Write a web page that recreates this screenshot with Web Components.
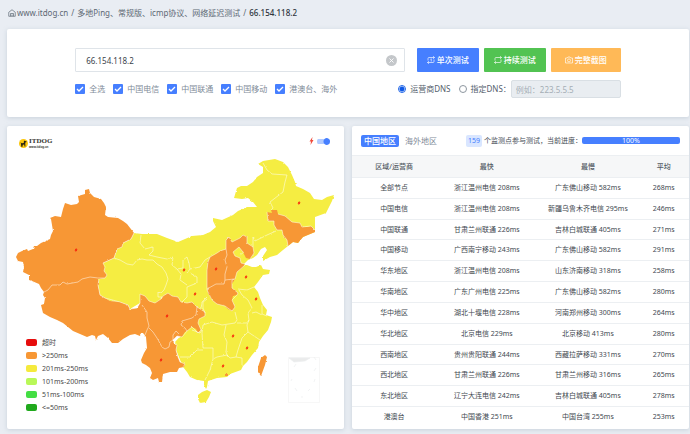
<!DOCTYPE html>
<html>
<head>
<meta charset="utf-8">
<title>66.154.118.2 - Ping</title>
<style>
html{background:#e9edf3}
body{margin:0;font-family:"Noto Sans","Noto Sans CJK SC",sans-serif;color:#444b54;
--blue:#467fff;--muted:#7f8b98;--line:#dfe4e9}
</style>
</head>
<body>
<ping-page></ping-page>
<script>
const define=(name,html,ready)=>{
  const t=document.createElement('template');
  t.innerHTML=html;
  customElements.define(name,class extends HTMLElement{
    constructor(){
      super();
      this.attachShadow({mode:'open'}).append(t.content.cloneNode(true));
    }
    connectedCallback(){ if(ready) ready(this,this.shadowRoot); }
  });
};

define('crumb-bar',`
<style>
:host{display:block;font-size:8px;line-height:12px;color:#5d6873}
nav{display:flex;align-items:center;gap:3px;padding:0 1px}
a{color:inherit;text-decoration:none;display:flex;align-items:center;gap:1px}
svg{width:8px;height:8px;fill:none;stroke:currentColor}
b{font-weight:500;color:#2e353d}
</style>
<nav aria-label="breadcrumb">
<a href="#"><svg viewBox="0 0 16 16" stroke-width="1.4"><path d="M1.5 6.5 8 1.5l6.500 5V14.500H1.500zM5 14.500V9h6v5.500M8 14.500V11"/></svg>www.itdog.cn</a>
<span>/</span><a href="#">多地Ping、常规版、icmp协议、网络延迟测试</a><span>/</span><b>66.154.118.2</b>
</nav>`);

define('panel-card',`
<style>
:host{display:flex;flex-direction:column;background:#fff;border-radius:2px;box-shadow:0 1px 4px #a9b8c680;min-width:0}
</style><slot></slot>`);

define('check-option',`
<style>
:host{display:block}
label{display:flex;align-items:center;gap:4px;color:var(--muted);font-size:8px;line-height:12px;white-space:nowrap}
.box{display:grid;width:10px;height:10px}
input{grid-area:1/1;appearance:none;margin:0;border-radius:1px;background:#fff}
input:checked{background:var(--blue)}
svg{grid-area:1/1;width:10px;height:10px;pointer-events:none;fill:none;stroke:#fff;stroke-width:1.3}
</style>
<label><span class="box"><input type="checkbox" checked><svg viewBox="0 0 10 10"><path d="M2 5l2 2 4-4"/></svg></span><slot></slot></label>`);

define('action-button',`
<style>
:host{display:block;flex:none}
button{display:flex;align-items:center;justify-content:center;gap:2px;width:100%;height:24px;padding:0 10px;border:0;border-radius:1px;background:var(--tone);color:#fff;font:500 8px/12px "Noto Sans","Noto Sans CJK SC",sans-serif;white-space:nowrap}
</style>
<button type="button"><slot name="icon"></slot><slot></slot></button>`);

define('ping-form',`
<style>
:host{display:block;padding:19px 10%}
form{display:grid;gap:8px}
.row{display:flex;align-items:center;gap:12px}
.field{flex:1;display:flex;align-items:center;box-sizing:border-box;height:24px;border:1px solid var(--line);border-radius:1px;padding:0 7px 0 10px;min-width:0}
input[type=text]{font:inherit;color:inherit;border:0;outline:0;background:none;padding:0;min-width:0}
.field input{flex:1;font-size:8px;color:#3c444c}
.clear{border:0;padding:0;background:none;display:flex}
.clear svg{width:11px;height:11px}
.actions{display:flex;gap:5px}
action-button svg{width:8px;height:8px;fill:none;stroke:#fff;stroke-width:1.3}
.opts{height:18px;justify-content:space-between}
.checks{display:flex;gap:8px}
.dns{display:flex;align-items:center;font-size:8px;line-height:12px;color:#56616d;white-space:nowrap;gap:8px}
.dns label{display:flex;align-items:center;gap:4px}
input[type=radio]{appearance:none;box-sizing:border-box;width:8px;height:8px;margin:0;border:1px solid #8d969f;border-radius:50%;background:#fff}
input[type=radio]:checked{border-color:#1f65e8;background:radial-gradient(circle,#0e58e6 0 2px,#fff 3px)}
.custom{display:flex;align-items:center}
.custom>input{box-sizing:border-box;width:110px;height:18px;border:1px solid #d9dfe4;border-radius:2px;background:#e9edf1;padding:0 4px;font-size:8px}
::placeholder{color:#a5adb5;opacity:1}
</style>
<form>
<div class="row">
<div class="field"><input type="text" aria-label="Host" value="66.154.118.2"><button class="clear" type="button" aria-label="Clear"><svg viewBox="0 0 22 22"><circle cx="11" cy="11" r="11" fill="#c4c7ca"/><path d="M7 7l8 8M15 7l-8 8" stroke="#fff" stroke-width="1.800"/></svg></button></div>
<div class="actions">
<action-button style="--tone:#467fff"><svg slot="icon" viewBox="0 0 16 16"><path d="M2 9V5q0-2 2-2h11M12 .5 15 3l-3 2.500M14 7v4q0 2-2 2H1M4 10.500 1 13l3 2.500M7 6.500l1.500-1V11"/></svg>单次测试</action-button>
<action-button style="--tone:#52c352"><svg slot="icon" viewBox="0 0 16 16"><path d="M2 9V5q0-2 2-2h11M12 .5 15 3l-3 2.500M14 7v4q0 2-2 2H1M4 10.500 1 13l3 2.500"/></svg>持续测试</action-button>
<action-button style="--tone:#ffb957;width:70px"><svg slot="icon" viewBox="0 0 16 16"><path d="M1 4h3.500L6 2h4l1.500 2H15v10H1z"/><circle cx="8" cy="8.800" r="3"/></svg>完整截图</action-button>
</div></div>
<div class="row opts">
<div class="checks"><check-option>全选</check-option><check-option>中国电信</check-option><check-option>中国联通</check-option><check-option>中国移动</check-option><check-option>港澳台、海外</check-option></div>
<div class="dns"><label><input type="radio" name="dns" checked>运营商DNS</label><div class="custom"><label><input type="radio" name="dns">指定DNS：</label><input type="text" aria-label="DNS" placeholder="例如：223.5.5.5" disabled></div></div>
</div>
</form>`);

define('site-logo',`
<style>
:host{display:flex;gap:1px;align-items:center;color:#33342f}
svg{width:9px;height:9px}
div{font:bold 7px/8px "Liberation Serif",serif}
small{display:block;font:bold 3px/4px "Liberation Sans",sans-serif}
</style>
<svg viewBox="0 0 18 18"><circle cx="9" cy="9" r="9" fill="#fcc70d"/><path d="M10 3l2 1 3 .5-.5 2-2 .5.300 8H11l-.5-4-3 .5-.5 4H4.500l-.5-6-1-3 2.500 2 4-.5z" fill="#272314"/></svg>
<div>ITDOG<small>www.itdog.cn</small></div>`);

define('map-switch',`
<style>
:host{display:block}
label{display:flex;align-items:center;gap:3px}
svg{width:5px;height:8px}
input{appearance:none;margin:0;width:13px;height:7px;border-radius:4px;background:radial-gradient(circle at 10px center,var(--blue) 3px,#0000 4px),linear-gradient(#0000 1px,#b1caff 1px 6px,#0000 6px)}
</style>
<label><svg viewBox="0 0 5 8"><path d="M3.500 0 .5 4.500h1.500L1.500 8 4.500 3H3z" fill="#f04a3a"/></svg><input type="checkbox" role="switch" aria-label="Markers" checked></label>`);

define('map-legend',`
<style>
:host{display:block}
ul{list-style:none;margin:0;padding:0}
li{display:flex;align-items:center;gap:5px;font-size:7px;line-height:13px;color:#4a4a4a}
i{width:11px;height:7px;border-radius:2px}
</style><ul></ul>`,(el,root)=>{
  const items=[['#e60d0d','超时'],['#f79734','>250ms'],['#f5ea3d','201ms-250ms'],['#b9f858','101ms-200ms'],['#43de43','51ms-100ms'],['#20a91d','<=50ms']];
  root.querySelector('ul').replaceChildren(...items.map(([c,t])=>{
    const li=document.createElement('li'),i=document.createElement('i');
    i.style.background=c; li.append(i,t); return li;
  }));
});

define('china-map',`
<style>
:host{display:block}
svg{display:block;width:100%;height:100%}
.y{fill:#f5ed42}.o{fill:#f79734}
.b{fill:none;stroke:#fff;stroke-opacity:.62;stroke-width:.8;stroke-linejoin:round}
</style>
<svg viewBox="7 126 337 303" preserveAspectRatio="xMidYMid meet" role="img" aria-label="China">
<defs><filter id="coast" x="0" y="0" width="100%" height="100%"><feTurbulence type="fractalNoise" baseFrequency=".28" numOctaves="2" seed="4"/><feDisplacementMap in="SourceGraphic" scale="2" xChannelSelector="R" yChannelSelector="G"/></filter></defs>
<g filter="url(#coast)">
<path class="y" d="M134 233 142 234 157 234 167 238 178 242 192 236 203 235 210 232 216 227 213 221 213 218 222 220 233 215 238 211 247 207 257 207 253 202 248 198 242 199 234 198 237 188 241 186 247 186 253 182 257 177 263 173 263 167 258 164 263 161 275 159 283 162 288 167 292 175 295 182 296 186 303 189 310 193 314 199 322 200 327 197 334 195 332 201 326 213 315 217 315 232 303 237 298 243 293 242 288 246 283 250 277 255 270 257 263 261 263 256 267 250 265 247 261 249 257 255 253 258 248 260 246 262 243 265 247 265 252 267 256 267 261 265 263 269 270 270 269 274 263 275 258 282 254 287 258 292 260 298 263 305 267 310 266 315 272 317 271 322 268 330 263 336 259 342 258 348 252 355 247 362 243 366 241 370 230 374 227 377 217 378 208 381 207 387 206 389 204 385 204 381 197 380 190 377 187 372 183 367 176 350 175 342 185 331 180 310 150 304 140 303 130 309 128 305 120 302 110 301 100 295 98 285 99 279 105 278 103 263 114 258 117 249 123 243 131 239z"/>
<path class="y" d="M202 392 207 390 211 392 209 397 206 402 200 403 198 399 198 395z"/>
<path class="o" d="M16 257 18 253 22 251 27 249 28 251 33 249 34 246 37 246 41 243 50 239 51 235 53 231 51 219 50 218 55 216 61 217 63 209 65 203 71 205 77 204 79 202 78 196 85 194 85 190 89 189 90 193 94 197 101 199 104 203 106 207 105 215 108 217 118 218 123 221 127 224 134 233 131 239 123 243 122 247 117 249 114 258 103 263 105 267 104 271 107 275 105 278 99 279 98 285 100 295 105 298 110 301 120 302 128 305 130 309 137 308 140 303 140 294 145 296 149 301 155 303 161 299 163 296 168 293 172 296 178 297 181 302 187 303 192 302 197 307 205 312 205 316 199 319 198 323 201 330 198 333 196 329 192 327 187 331 185 332 182 337 177 336 173 340 173 342 177 345 176 350 178 357 180 362 185 364 184 367 179 368 177 372 170 372 163 374 162 382 159 382 158 378 153 380 150 378 152 373 150 368 146 365 142 363 141 360 144 353 147 348 146 337 143 333 141 333 140 336 135 334 130 335 123 339 118 343 112 343 108 338 103 334 98 336 96 340 95 336 92 335 87 337 80 334 73 331 68 327 63 323 57 320 50 317 43 313 41 305 44 304 45 298 43 295 44 292 41 288 39 284 32 281 29 280 29 275 23 272 24 267 23 262 18 261z"/>
<path class="o" d="M210 257 217 253 220 251 226 249 226 240 229 237 232 242 240 238 243 235 247 237 247 243 253 247 254 253 250 259 246 258 243 252 239 247 233 252 235 256 240 258 241 263 245 264 243 267 237 272 235 279 232 284 232 288 238 293 237 295 233 296 232 300 235 307 232 311 228 309 225 306 217 304 212 300 208 293 207 286 207 270 208 262zM267 212 272 213 271 210 277 210 278 214 285 216 292 222 300 223 302 227 308 227 311 226 315 230 315 232 303 237 298 243 293 242 288 246 287 240 283 235 282 230 277 230 274 225 274 221 268 221zM265 355 267 357 265 365 261 376 258 372 258 367 261 358zM225 374h3v2h-3z"/>
<g class="b">
<path d="M44 292 48 290 52 285 60 285 63 282 67 284 78 282 82 279 90 277 98 278 105 278 107 275 104 271 105 267 103 263 114 258 117 249 122 247 123 243 131 239 134 233"/>
<path d="M99 279 98 285 100 295 105 298 120 302 128 305 130 309 137 308 140 303 140 294 145 296 149 301 155 303 161 299 163 296 168 293 172 296 178 297 181 302 187 303 192 302 197 307 205 312 205 316 199 319 198 323 201 330 198 333 192 327 187 331 182 337 177 336 173 340 177 345 176 350 178 357 180 362 185 364 183 367"/>
<path d="M114 258 120 260 127 264 133 265 137 260 142 259 147 260 153 260 157 264 162 267 166 273 168 279 166 285 164 290 161 293 158 292 158 297 162 297 161 299M141 235 140 243 145 249 153 247 153 251 149 255 157 257 167 259 173 257 172 265 177 269 183 268 183 260 187 257 189 263 190 269 187 273M190 269 200 267 205 260 210 257 217 253 220 251 226 249 226 240 229 237 232 242 240 238 243 235 247 237 247 243 253 247M177 269 181 274 180 280 187 285M190 273 197 277 197 283 187 287 187 297 182 302"/>
<path d="M142 305 147 312 147 318 149 326 147 330 145 335M149 328 153 332 157 338 162 347 165 349 169 347 170 342 173 340 173 335 176 331 179 334M197 307 196 315 192 318 182 321 181 325 185 328 187 331"/>
<path d="M210 257 208 262 207 270 207 290 212 300 217 304 225 306 232 311 235 307 232 300 237 295 238 293 232 288 232 280 235 279 237 272 245 265M207 289 216 284 224 284 225 280 234 279M226 249 227 255 225 260 227 267 225 274 225 280M253 247 254 253 250 259M243 252 239 247 233 252 235 256 240 258 241 263 245 264M240 255 244 252"/>
<path d="M207 299 203 302 203 308 205 313M201 309 202 302 207 297M203 325 212 322 222 325 235 323 237 320 235 312M239 290 242 295 248 300 252 308 248 313 249 320 247 323 237 323M238 289 247 290 254 287M262 305 262 314 267 316M252 313 256 312 262 315M249 320 247 325 248 332 260 340M226 325 224 335 227 342 226 352 228 357M248 332 242 338 238 350 236 357 242 358 242 366M205 380 210 370 213 359 217 357 227 355 230 358 236 357M203 325 202 333 203 348 213 348 213 359M203 350 197 350 190 357 180 357M192 330 200 333 202 330"/>
<path d="M263 163 267 170 272 174 287 175 285 182 283 192 270 202 273 208 271 210M278 214 285 216 292 222 300 223 302 227 311 226 315 230M267 212 268 221 274 221 274 225 277 230 282 230 283 235 287 240 288 246M276 231 267 235 255 241 253 237 253 247"/>
</g></g>
<g fill="#f71808" id="pins"></g>
<g fill="none" stroke="#eceeef" stroke-width=".7"><path d="M288.500 357.500h31v45h-31z" stroke="#f3f3f3"/><path d="M289 358h21l-5 3-11 1z" fill="#eaebeb"/><path d="M296 364l-2 3M314 357l2 3M314 371l2-3M292 379l-1 2M295 388l2 3M301 397h2M308 391l2-2M314 382l1-3"/></g>
</svg>`,(el,root)=>{
  const pins=[[76,250],[184,270],[195,294],[216,269],[299,203],[246,277],[256,299],[233,336],[247,348],[223,366],[167,316],[161,360]];
  root.querySelector('#pins').innerHTML=pins.map(([x,y])=>`<path transform="translate(${x} ${y})" d="M.3-2-1.500.4h1L-.3 2 1.600-.4h-1z"/>`).join('');
});

define('map-panel',`
<style>
:host{display:grid;flex:1;grid-template:minmax(0,1fr)/minmax(0,1fr)}
:host>*{grid-area:1/1}
site-logo{place-self:start;margin:11px 12px}
map-switch{place-self:start end;margin:11px 14px}
map-legend{place-self:end start;margin:15px 19px}
</style>
<china-map></china-map><site-logo></site-logo><map-switch></map-switch><map-legend></map-legend>`);

define('result-header',`
<style>
:host{display:flex;align-items:center;height:29px;padding:0 9px;font-size:7px;line-height:12px;white-space:nowrap}
button{border:0;margin:0;padding:0 3px;height:12px;border-radius:2px;background:none;font:8px/12px "Noto Sans","Noto Sans CJK SC",sans-serif;color:var(--muted)}
button[aria-selected=true]{background:var(--blue);color:#fff;font-weight:500}
[role=tablist]{display:flex;gap:3px;flex:1}
.status{display:flex;align-items:center;gap:2px}
.count{background:#d9e6ff;color:var(--blue);border-radius:2px;padding:0 2px}
.bar{width:98px;height:7px;background:var(--blue);border-radius:2px;color:#fff;text-align:center;line-height:7px}
</style>
<div role="tablist"><button role="tab" aria-selected="true">中国地区</button><button role="tab" aria-selected="false">海外地区</button></div>
<div class="status"><span class="count">159</span><span>个监测点参与测试，当前进度：</span></div>
<div class="bar" role="progressbar" aria-valuenow="100" aria-label="当前进度">100%</div>`);

define('result-table',`
<style>
:host{display:flex;flex-direction:column;flex:1;padding-bottom:2px}
table{flex:1;width:100%;border-collapse:collapse;table-layout:fixed;font-size:7px;line-height:10px;text-align:center;color:#424950}
th,td{padding:0;font-weight:400;white-space:nowrap;border-bottom:1px solid #eceff2}
th{font-weight:500;height:21px;background:#f6f7f8;border-top:1px solid #eceff2;color:#535b64}
tbody tr:last-child td{border:0}
td{height:19px}
.m{width:30%}.a{width:25%}.z{width:15%}
</style>
<table><thead><tr><th class="a">区域/运营商</th><th class="m">最快</th><th class="m">最慢</th><th class="z">平均</th></tr></thead><tbody></tbody></table>`,(el,root)=>{
  const rows=`全部节点|浙江温州电信 208ms|广东佛山移动 582ms|268ms
中国电信|浙江温州电信 208ms|新疆乌鲁木齐电信 295ms|246ms
中国联通|甘肃兰州联通 226ms|吉林白城联通 405ms|271ms
中国移动|广西南宁移动 243ms|广东佛山移动 582ms|291ms
华东地区|浙江温州电信 208ms|山东济南移动 318ms|258ms
华南地区|广东广州电信 225ms|广东佛山移动 582ms|280ms
华中地区|湖北十堰电信 228ms|河南郑州移动 300ms|264ms
华北地区|北京电信 229ms|北京移动 413ms|280ms
西南地区|贵州贵阳联通 244ms|西藏拉萨移动 331ms|270ms
西北地区|甘肃兰州联通 226ms|甘肃兰州移动 316ms|265ms
东北地区|辽宁大连电信 242ms|吉林白城联通 405ms|278ms
港澳台|中国香港 251ms|中国台湾 255ms|253ms`;
  root.querySelector('tbody').innerHTML=rows.split('\n').map(r=>'<tr>'+r.split('|').map(c=>`<td>${c}</td>`).join('')+'</tr>').join('');
});

define('ping-page',`
<style>
:host{display:grid;grid-template-rows:auto auto 1fr;box-sizing:border-box;min-height:100vh;padding:7px 1px 5px 7px}
crumb-bar{margin-bottom:10px}
main{display:grid;grid-template-columns:minmax(0,1fr) minmax(0,1fr);gap:8px;margin-top:9px}
</style>
<crumb-bar></crumb-bar>
<panel-card><ping-form></ping-form></panel-card>
<main><panel-card><map-panel></map-panel></panel-card><panel-card><result-header></result-header><result-table></result-table></panel-card></main>`);
</script>
</body>
</html>
